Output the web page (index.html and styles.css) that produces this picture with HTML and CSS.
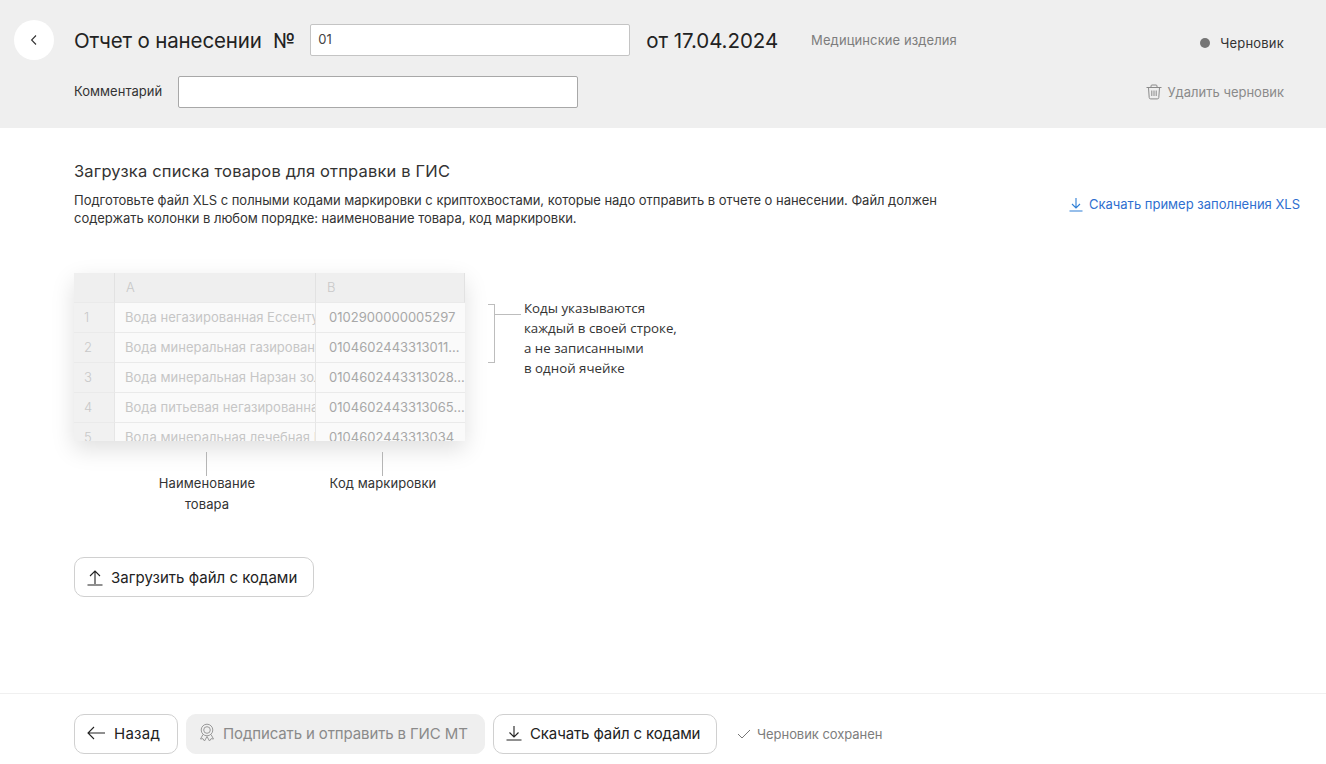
FILE: index.html
```html
<!DOCTYPE html>
<html lang="ru">
<head>
<meta charset="utf-8">
<title>Отчет о нанесении</title>
<link rel="stylesheet" href="styles.css">
</head>
<body>
<div class="page">
  <header class="head">
    <a class="back" aria-label="Назад"><svg width="10" height="12" viewBox="0 0 10 12"><path d="M7 1.5 2.6 6 7 10.5" fill="none" stroke="#333" stroke-width="1.1"/></svg></a>
    <div class="head-body">
      <div class="row-one">
        <span class="title">Отчет о нанесении&nbsp;&nbsp;№</span>
        <div class="field num">01</div>
        <span class="title date">от 17.04.2024</span>
        <span class="category">Медицинские изделия</span>
        <span class="status"><i class="dot"></i>Черновик</span>
      </div>
      <div class="row-two">
        <span class="comment-label">Комментарий</span>
        <div class="field comment"></div>
        <a class="delete">
          <svg width="16" height="16" viewBox="0 0 16 16" fill="none" stroke="#8a8a8a" stroke-width="1"><path d="M.5 3.500h15M5 3.500V2a1 1 0 0 1 1-1h4a1 1 0 0 1 1 1v1.500M2.500 3.500l.7 10a1.500 1.500 0 0 0 1.500 1.400h6.600a1.500 1.500 0 0 0 1.500-1.400l.7-10M5.800 6.500v5.500M8 6.500v5.500M10.200 6.500v5.500"/></svg>
          Удалить черновик
        </a>
      </div>
    </div>
  </header>

  <main class="content">
    <h2 class="heading">Загрузка списка товаров для отправки в ГИС</h2>
    <div class="intro">
      <p class="desc">Подготовьте файл XLS с полными кодами маркировки с криптохвостами, которые надо отправить в отчете о нанесении. Файл должен содержать колонки в любом порядке: наименование товара, код маркировки.</p>
      <a class="sample">
        <svg width="14" height="15" viewBox="0 0 14 15" fill="none" stroke="#2f7fd6" stroke-width="1.100"><path d="M7 1v9.500M3 7l4 4 4-4M.5 14h13"/></svg>
        Скачать пример заполнения XLS
      </a>
    </div>

    <div class="example">
      <div class="sheet-column">
        <div class="sheet">
          <div class="cell corner"></div><div class="cell col">A</div><div class="cell col">B</div>
          <div class="cell idx">1</div><div class="cell name">Вода негазированная Ессентуки</div><div class="cell code">0102900000005297</div>
          <div class="cell idx">2</div><div class="cell name">Вода минеральная газированная</div><div class="cell code">0104602443313011...</div>
          <div class="cell idx">3</div><div class="cell name">Вода минеральная Нарзан золотой</div><div class="cell code">0104602443313028...</div>
          <div class="cell idx">4</div><div class="cell name">Вода питьевая негазированная</div><div class="cell code">0104602443313065...</div>
          <div class="cell idx">5</div><div class="cell name">Вода минеральная лечебная Borjomi</div><div class="cell code">0104602443313034</div>
        </div>
        <div class="captions">
          <div class="caption cap-name"><i class="tick"></i>Наименование<br>товара</div>
          <div class="caption cap-code"><i class="tick"></i>Код маркировки</div>
        </div>
      </div>
      <div class="note">
        <i class="bracket"></i>
        <p class="note-text">Коды указываются<br>каждый в своей строке,<br>а не записанными<br>в одной ячейке</p>
      </div>
    </div>

    <a class="btn upload">
      <svg width="16" height="17" viewBox="0 0 16 17" fill="none" stroke="#222" stroke-width="1.100"><path d="M8 15V2M3 7l5-5 5 5M.5 16h15"/></svg>
      Загрузить файл с кодами
    </a>
  </main>

  <footer class="foot">
    <a class="btn nav-back">
      <svg width="18" height="14" viewBox="0 0 18 14" fill="none" stroke="#222" stroke-width="1.100"><path d="M7 1 1 7l6 6M1 7h17"/></svg>
      Назад
    </a>
    <a class="btn sign">
      <svg width="16" height="20" viewBox="0 0 16 20" fill="none" stroke="#9a9a9a" stroke-width="1"><circle cx="8" cy="7" r="5.800"/><circle cx="8" cy="7" r="3.300"/><path d="M4 11.500 1.500 16l2.500-.3 1.500 2.300 2.500-4.500 2.500 4.500 1.500-2.300 2.500.3-2.500-4.500"/></svg>
      Подписать и отправить в ГИС МТ
    </a>
    <a class="btn download">
      <svg width="16" height="16" viewBox="0 0 16 16" fill="none" stroke="#222" stroke-width="1.100"><path d="M8 1v11M3.500 7.500 8 12l4.500-4.500M.5 15h15"/></svg>
      Скачать файл с кодами
    </a>
    <span class="saved">
      <svg width="14" height="10" viewBox="0 0 14 10" fill="none" stroke="#777" stroke-width="1"><path d="M1 5l4 4 8-8"/></svg>
      Черновик сохранен
    </span>
  </footer>
</div>
</body>
</html>
```
FILE: styles.css
```css
* { box-sizing: border-box; }
html, body { margin: 0; height: 100%; }
body { font-family: Inter, "Noto Sans", sans-serif; color: #222; background: #fff; overflow: hidden; }
p, h2 { margin: 0; font-weight: 400; }
.page { width: 1326px; height: 764px; display: flex; flex-direction: column; }

.head { height: 128px; flex: none; background: #efefef; display: flex; padding: 20px 42px 0 14px; gap: 20px; }
.back { width: 40px; height: 40px; flex: none; border-radius: 50%; background: #fff; display: flex; align-items: center; justify-content: center; }
.head-body { flex: 1; display: flex; flex-direction: column; margin-top: 4px; gap: 20px; }
.row-one, .row-two { display: flex; align-items: center; height: 32px; }
.title { font-size: 20.500px; letter-spacing: -.14px; color: #222; white-space: nowrap; }
.field { height: 100%; background: #fff; border: 1px solid #c4c4c4; border-radius: 2px; font-size: 13px; display: flex; align-items: center; padding: 0 7px 2px; color: #444; }
.num { width: 320px; margin-left: 15px; }
.date { margin-left: 16px; letter-spacing: -.06px; }
.category { font-size: 13px; color: #7d7d7d; margin-left: 33px; letter-spacing: .1px; }
.status { margin-left: auto; display: flex; align-items: center; gap: 10px; font-size: 13px; letter-spacing: .2px; color: #333; padding-top: 5px; }
.dot { width: 10px; height: 10px; border-radius: 50%; background: #757575; }
.comment-label { font-size: 13px; letter-spacing: .02px; width: 104px; color: #333; padding-bottom: 2px; }
.comment { width: 400px; border-color: #a8a8a8; }
.delete { margin-left: auto; display: flex; align-items: center; gap: 5px; font-size: 13px; color: #8a8a8a; padding-bottom: 1px; }

.content { flex: 1; padding: 33px 26px 0 74px; display: flex; flex-direction: column; align-items: flex-start; }
.heading { font-size: 16.500px; line-height: 20px; color: #333; letter-spacing: .17px; }
.intro { align-self: stretch; display: flex; justify-content: space-between; align-items: flex-start; margin-top: 10px; }
.desc { width: 880px; font-size: 13px; line-height: 18px; letter-spacing: -.03px; color: #333; }
.sample { display: flex; align-items: center; gap: 6px; font-size: 13px; color: #2f6fd0; margin-top: 5px; white-space: nowrap; }

.example { display: flex; margin-top: 46px; }
.sheet-column { width: 391px; }
.sheet { display: grid; grid-template-columns: 41px 201px 149px; grid-auto-rows: 30px; height: 168px; overflow: hidden; box-shadow: 0 8px 22px rgba(0,0,0,.13); background: #fafafa; }
.cell { font-size: 13px; letter-spacing: .02px; display: flex; align-items: center; white-space: nowrap; overflow: hidden; border-bottom: 1px solid #eaeaea; color: #c2c2c2; padding-bottom: 2px; }
.corner, .col { background: #efefef; border-right: 1px solid #e2e2e2; padding-left: 11px; color: #c8c8c8; font-weight: 300; }
.idx { background: #f1f1f1; padding-left: 10px; border-right: 1px solid #e6e6e6; color: #c8c8c8; font-weight: 300; }
.name { padding-left: 10px; border-right: 1px solid #e6e6e6; color: #c6c6c6; }
.code { padding-left: 13px; color: #a8a8a8; }
.captions { position: relative; height: 116px; }
.caption { position: absolute; top: 11px; font-size: 13px; line-height: 21px; letter-spacing: .08px; text-align: center; color: #333; width: 140px; }
.tick { display: block; width: 1px; height: 24px; background: #b5b5b5; margin: 0 0 -3px 69px; }
.cap-name { left: 63px; }
.cap-code { left: 239px; }
.note { display: flex; margin-left: 23px; margin-top: 31px; height: 80px; }
.bracket { width: 7px; height: 59px; border: 1px solid #bdbdbd; border-left: 0; position: relative; }
.bracket::after { content: ""; position: absolute; left: 6px; top: 9px; width: 27px; height: 1px; background: #bdbdbd; }
.note-text { font-family: "Open Sans", sans-serif; font-size: 13.300px; line-height: 20px; margin-left: 29px; margin-top: -6px; color: #333; white-space: nowrap; }

.btn { height: 40px; border-radius: 10px; border: 1px solid #d0d0d0; display: inline-flex; align-items: center; font-size: 15px; letter-spacing: -.12px; color: #222; white-space: nowrap; }
.upload { width: 240px; padding-left: 12px; gap: 8px; letter-spacing: .01px; }
.foot { height: 71px; flex: none; border-top: 1px solid #f0f0f0; padding: 20px 0 0 74px; display: flex; align-items: flex-start; gap: 8px; }
.foot .btn { padding-bottom: 2px; }
.nav-back { width: 104px; padding-left: 12px; gap: 9px; }
.foot .nav-back { letter-spacing: .25px; }
.sign { width: 299px; padding-left: 12px; gap: 8px; background: #efefef; border-color: #efefef; color: #8a8a8a; }
.download { width: 224px; padding-left: 12px; gap: 8px; }
.saved { display: flex; align-items: center; gap: 6px; margin-left: 12px; height: 40px; font-size: 13px; letter-spacing: -.05px; color: #7d7d7d; }
```
